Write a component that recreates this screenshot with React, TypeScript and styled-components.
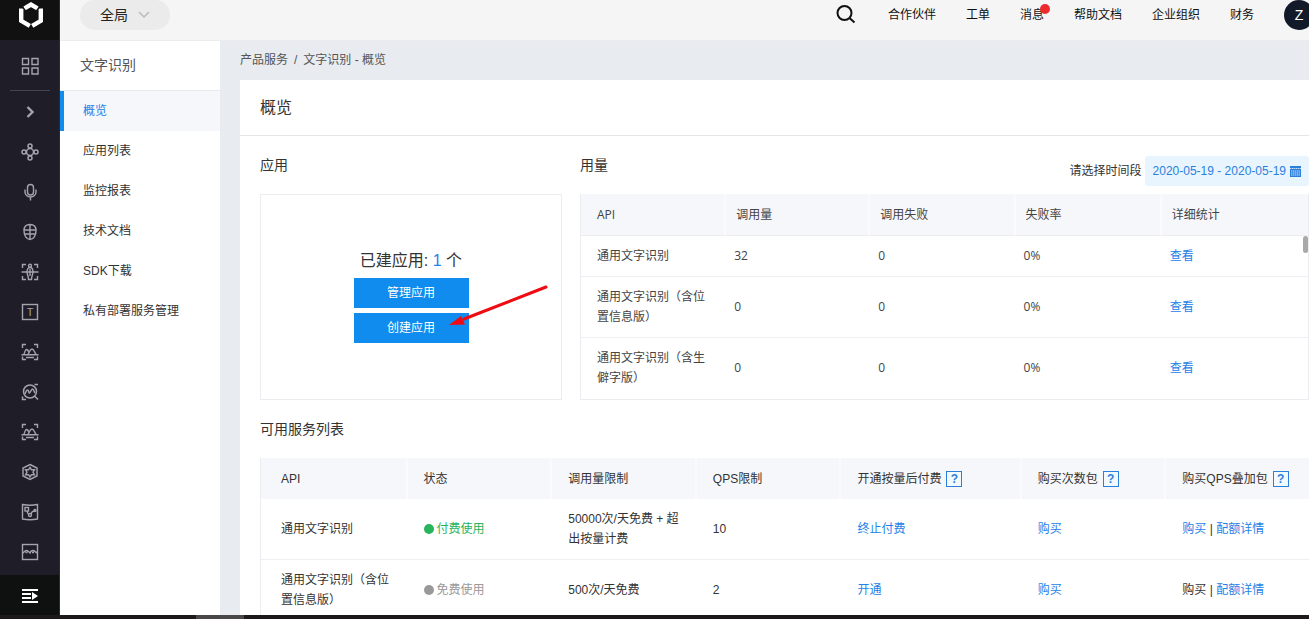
import React from 'react';
import styled, { createGlobalStyle } from 'styled-components';

const GlobalStyle = createGlobalStyle`
  *, *::before, *::after { box-sizing: border-box; }
  body {
    margin: 0;
    overflow: hidden;
    color: #333;
    background: #fff;
    font: 12px/20px "Liberation Sans", "Noto Sans CJK SC", sans-serif;
  }
  h1, h2, h3, p, ul { margin: 0; padding: 0; font-weight: 400; }
  ul { list-style: none; }
  a { color: inherit; text-decoration: none; }
  button, select { font: inherit; color: inherit; border: 0; cursor: pointer; }
  svg { display: block; }
`;

/* ---------- page frame ---------- */

const Page = styled.div`
  display: flex;
  flex-direction: column;
  height: 100vh;
  overflow: hidden;
`;

const Columns = styled.div`
  display: flex;
  flex: 1;
  min-height: 0;
`;

const BottomStrip = styled.div`
  flex: none;
  height: 4px;
  background: linear-gradient(90deg, #1e1a1b 196px, #4a4748 196px, #4a4748 244px, #1e1a1b 244px);
`;

const Body = styled.div`
  display: flex;
  flex: 1;
  flex-direction: column;
  min-width: 0;
`;

const Workspace = styled.div`
  display: flex;
  flex: 1;
  min-height: 0;
`;

/* ---------- dark icon rail ---------- */

const Rail = styled.nav`
  display: flex;
  flex: none;
  flex-direction: column;
  width: 60px;
  color: #a5a4ad;
  background: #1f1d28;
  border-right: 1px solid #2c2b30;
`;

const Logo = styled.a`
  display: flex;
  justify-content: center;
  height: 40px;
  padding: 2px 0 0 2px;
  background: #111;
`;

const RailButton = styled.button<{ $tall?: boolean }>`
  display: flex;
  flex: none;
  align-items: center;
  justify-content: center;
  height: ${(p) => (p.$tall ? 50 : 40)}px;
  padding: 2px 0 0;
  color: inherit;
  background: none;
`;

const RailDivider = styled.hr`
  flex: none;
  width: 40px;
  height: 1px;
  margin: 0 auto;
  border: 0;
  background: #45444f;
`;

const RailFooter = styled.button`
  display: flex;
  align-items: center;
  justify-content: center;
  height: 40px;
  margin-top: auto;
  padding: 2px 0 0;
  color: #fff;
  background: #0f1010;
`;

/* ---------- top bar ---------- */

const TopBar = styled.header`
  display: flex;
  flex: none;
  align-items: center;
  justify-content: space-between;
  height: 41px;
  padding: 0 0 10px 20px;
  color: #111;
  background: #f5f5f5;
  border-bottom: 1px solid #ececf0;
  overflow: hidden;
`;

const RegionPicker = styled.label`
  position: relative;
  display: block;
  width: 90px;
  height: 30px;
  color: #bbb;

  svg {
    position: absolute;
    top: 10px;
    right: 20px;
    pointer-events: none;
  }
`;

const RegionSelect = styled.select`
  width: 100%;
  height: 30px;
  padding: 0 20px;
  color: #222;
  font-size: 14px;
  background: #ebebeb;
  border-radius: 15px;
  appearance: none;
`;

const TopLinks = styled.div`
  display: flex;
  align-items: center;
  gap: 30px;
`;

const IconButton = styled.button`
  padding: 0;
  color: #111;
  background: none;
`;

const TopLink = styled.a`
  position: relative;
`;

const UnreadDot = styled.span`
  position: absolute;
  top: -1px;
  right: -6px;
  width: 10px;
  height: 10px;
  background: #ee2a2f;
  border-radius: 50%;
`;

const Avatar = styled.button`
  width: 30px;
  height: 30px;
  margin-right: -5px;
  padding: 0;
  color: #fff;
  font-size: 14px;
  background: #121929;
  border-radius: 50%;
`;

/* ---------- product menu ---------- */

const ProductMenu = styled.nav`
  flex: none;
  width: 160px;
  background: #fff;
`;

const ProductName = styled.h2`
  height: 50px;
  padding: 0 20px;
  color: #555;
  font-size: 14px;
  line-height: 48px;
  border-bottom: 1px solid #e8e9ee;
`;

const MenuLink = styled.a<{ $active?: boolean }>`
  display: block;
  height: 40px;
  padding-left: 19px;
  line-height: 40px;
  color: ${(p) => (p.$active ? '#2482e8' : '#333')};
  background: ${(p) => (p.$active ? '#f6f7fb' : '#fff')};
  border-left: 4px solid ${(p) => (p.$active ? '#108cee' : '#fff')};
`;

/* ---------- content ---------- */

const Main = styled.main`
  display: flex;
  flex: 1;
  flex-direction: column;
  min-width: 0;
  padding-left: 20px;
  background: #e8ebef;
`;

const Breadcrumb = styled.nav`
  display: flex;
  flex: none;
  gap: 6px;
  height: 39px;
  color: #555;
  line-height: 38px;
`;

const Panel = styled.section`
  flex: 1;
  min-height: 0;
  background: #fff;
  overflow: hidden;
`;

const PageTitle = styled.h1`
  height: 56px;
  padding-left: 20px;
  font-size: 16px;
  line-height: 56px;
  border-bottom: 1px solid #e4e5e8;
`;

const PanelBody = styled.div`
  padding-left: 20px;
`;

const Overview = styled.div`
  display: flex;
  gap: 18px;
`;

const AppColumn = styled.section`
  flex: none;
  width: 302px;
`;

const UsageColumn = styled.section`
  flex: 1;
  min-width: 0;
`;

const SectionHead = styled.div`
  display: flex;
  align-items: center;
  justify-content: space-between;
  height: 58px;
`;

const SectionTitle = styled.h3`
  font-size: 14px;
`;

const DateField = styled.div`
  display: flex;
  align-items: center;
  align-self: flex-end;
  gap: 3px;
  padding-bottom: 8px;
`;

const DateButton = styled.button`
  display: flex;
  align-items: center;
  gap: 4px;
  height: 30px;
  padding: 0 8px;
  color: #2b7fdc;
  background: #e8f5fe;
  border-radius: 3px;
`;

const AppCard = styled.div`
  position: relative;
  display: flex;
  flex-direction: column;
  align-items: center;
  justify-content: center;
  gap: 5px;
  height: 206px;
  border: 1px solid #ececf0;
`;

const AppCount = styled.p`
  margin-bottom: 2px;
  font-size: 16px;
`;

const Count = styled.span`
  color: #2482e8;
`;

const PrimaryButton = styled.button`
  width: 115px;
  height: 30px;
  padding: 0;
  color: #fff;
  background: #108cee;
`;

const Pointer = styled.svg`
  position: absolute;
  top: 88px;
  left: 187px;
  pointer-events: none;
`;

/* ---------- tables ---------- */

const Link = styled.a`
  color: #2482e8;
`;

const UsageFrame = styled.div`
  position: relative;
  height: 206px;
  border: 1px solid #ececf0;
  border-top: 0;
  overflow: hidden;
`;

const ScrollThumb = styled.span`
  position: absolute;
  top: 42px;
  right: 0;
  width: 5px;
  height: 17px;
  background: #a9a9a9;
  border-radius: 3px;
`;

const Table = styled.table`
  width: 100%;
  border-collapse: separate;
  border-spacing: 0;
  table-layout: fixed;

  th {
    font-weight: 400;
    text-align: left;
    background: #f6f7fb;
  }
  th + th { border-left: 2px solid #fbfbfd; }
  td { border-bottom: 1px solid #efeff3; }
`;

const UsageTable = styled(Table)`
  color: #444;
  font-family: "Open Sans", "Noto Sans CJK SC", sans-serif;

  th { height: 42px; padding: 0 10px; border-bottom: 1px solid #ececf0; }
  td { padding: 10px; }
  th:first-child, td:first-child { padding-left: 16px; }
  tr:last-child td { border-bottom: 0; }
`;

const ServiceTable = styled(Table)`
  border-left: 1px solid #ececf0;

  th { height: 41px; padding: 0 0 0 16px; }
  td { height: 61px; padding: 10px 12px 10px 18px; }
  th:first-child, td:first-child { padding-left: 20px; }
`;

const Column = styled.col<{ $share: number }>`
  width: ${(p) => p.$share}%;
`;

const HeadLabel = styled.span`
  display: flex;
  align-items: center;
  gap: 5px;
  padding-top: 1px;
  white-space: nowrap;
`;

const HelpButton = styled.button`
  width: 16px;
  height: 16px;
  padding: 0;
  color: #2b7fdc;
  font-weight: 700;
  line-height: 14px;
  background: #f3faff;
  border: 1px solid #2b7fdc;
`;

const Status = styled.span<{ $paid: boolean }>`
  display: flex;
  align-items: center;
  gap: 3px;
  color: ${(p) => (p.$paid ? '#27b45b' : '#999')};

  &::before {
    width: 10px;
    height: 10px;
    background: currentColor;
    border-radius: 50%;
    content: "";
  }
`;

/* ---------- icons ---------- */

const Glyph = ({ children, width = 1.4 }: { children: React.ReactNode; width?: number }) => (
  <svg width="18" height="18" viewBox="0 0 18 18" fill="none" stroke="currentColor" strokeWidth={width} aria-hidden="true">
    {children}
  </svg>
);

const corners = 'M1.5 5V1.5h3.5M13 1.5h3.5V5';

const LandscapeScan = () => (
  <Glyph>
    <path d={corners} />
    <path d="M3 11C4 9 4 6.500 5.500 6.500S7.500 8 8 9.500M7 11.500C8.500 9 9 6 11 6s2.500 3 4 5.500" />
    <path d="M0.500 11.800h17M1.500 13.500v3h3.500M16.500 13.500v3H13M5 14.500h8" />
  </Glyph>
);

const railIcons: { label: string; icon: React.ReactNode }[] = [
  {
    label: '展开',
    icon: <Glyph width={2.4}><path d="M6.500 4 11.500 9l-5 5" /></Glyph>,
  },
  {
    label: '节点',
    icon: (
      <Glyph width={1.5}>
        <circle cx="9" cy="9" r="3.500" />
        <circle cx="9" cy="3" r="2" />
        <circle cx="9" cy="15" r="2" />
        <circle cx="3" cy="9" r="2" />
        <circle cx="15" cy="9" r="2" />
      </Glyph>
    ),
  },
  {
    label: '语音',
    icon: (
      <Glyph>
        <rect x="6.500" y="1.500" width="6" height="10.500" rx="3" />
        <path d="M4 6.500V9a5.500 5 0 0 0 11 0V6.500M9.500 14v3.500" />
      </Glyph>
    ),
  },
  {
    label: '人脸',
    icon: (
      <Glyph>
        <path d="M9 1.500c4 0 6 2 6 6 0 5-2.500 9-6 9s-6-4-6-9c0-4 2-6 6-6zM9 1.500v15M3 7h12M4 11h10" />
      </Glyph>
    ),
  },
  {
    label: '人体',
    icon: (
      <Glyph>
        <path d={corners} />
        <path d="M1.500 13v3.500H5M13 16.500h3.500V13M0.500 9h17" />
        <circle cx="9" cy="2.800" r="1.500" />
        <path d="M9 4.500c2 0 3 2 3 4.500s-1.500 4-1.500 7.500h-3C7.500 13 6 11.500 6 9s1-4.500 3-4.500zM9 6v7" />
      </Glyph>
    ),
  },
  {
    label: '文字',
    icon: (
      <Glyph>
        <rect x="1.500" y="1.500" width="15" height="15" />
        <text x="9" y="13" fontSize="11" textAnchor="middle" fill="currentColor" stroke="none">T</text>
      </Glyph>
    ),
  },
  { label: '图像', icon: <LandscapeScan /> },
  {
    label: '图像搜索',
    icon: (
      <Glyph width={1.5}>
        <circle cx="9" cy="8.500" r="6.500" />
        <path d="M4 11C5 9 5 7 6.500 7s1 3 2 3 1.500-4 3-4 1.500 3 2.500 4M13.500 13l3.500 3.500M13.500 1.500H17M1.500 13.500v3H5" />
      </Glyph>
    ),
  },
  { label: '图像处理', icon: <LandscapeScan /> },
  {
    label: '知识',
    icon: (
      <Glyph>
        <path d="M9 1.500 16 5v8l-7 3.500L2 13V5z" />
        <path d="M9 4.500l1.500 2.200h3L12 9.200l1.500 2.500h-3L9 14l-1.500-2.300h-3L6 9.200 4.500 6.700h3z" />
      </Glyph>
    ),
  },
  {
    label: '数据',
    icon: (
      <Glyph>
        <path d="M1.500 1.500q7.500 1.500 15 0v14.500q-7.500 1.500-15 0z" />
        <rect x="4" y="4.500" width="3.500" height="3.500" />
        <circle cx="9" cy="12" r="1.500" />
        <circle cx="14" cy="7.500" r="1" />
        <path d="M6.500 8v2l1.500 1.200M10 11c.500-2 2-3 3.500-3" />
      </Glyph>
    ),
  },
  {
    label: '图片',
    icon: (
      <Glyph>
        <rect x="1.500" y="1.500" width="15" height="15" />
        <path d="M1.500 10C3 9.500 4 7.500 5.500 7.500S8 9 9 10c.500-1.500 1.500-2.500 3-2.500s2.500 2 4.500 2.500M4.500 9.500h2M11 9.500h2" />
      </Glyph>
    ),
  },
];

/* ---------- data ---------- */

const topLinks = ['合作伙伴', '工单', '消息', '帮助文档', '企业组织', '财务'];
const menu = ['概览', '应用列表', '监控报表', '技术文档', 'SDK下载', '私有部署服务管理'];

const usageHead = ['API', '调用量', '调用失败', '失败率', '详细统计'];
const usageShares = [19.7, 19.8, 20, 20.1, 20.4];
const usage = [
  { api: '通用文字识别', calls: 32, failed: 0, rate: '0%' },
  { api: '通用文字识别（含位置信息版）', calls: 0, failed: 0, rate: '0%' },
  { api: '通用文字识别（含生僻字版）', calls: 0, failed: 0, rate: '0%' },
];

const serviceHead = [
  { label: 'API' },
  { label: '状态' },
  { label: '调用量限制' },
  { label: 'QPS限制' },
  { label: '开通按量后付费', help: true },
  { label: '购买次数包', help: true },
  { label: '购买QPS叠加包', help: true },
];
const serviceShares = [13.8, 13.8, 13.8, 13.8, 17.2, 13.8, 13.8];
const services = [
  { api: '通用文字识别', paid: true, limit: '50000次/天免费 + 超出按量计费', qps: 10, action: '终止付费' },
  { api: '通用文字识别（含位置信息版）', paid: false, limit: '500次/天免费', qps: 2, action: '开通' },
];

export default function App() {
  return (
    <Page>
      <GlobalStyle />
      <Columns>
        <Rail aria-label="产品">
          <Logo href="#" aria-label="首页">
            <svg width="26" height="26" viewBox="0 0 26 26" fill="none" stroke="#fff" strokeWidth="4.400" aria-hidden="true">
              <path d="M6.500 6.300 13 2.600l6.500 3.700" />
              <path d="M3.200 6.500v12.300l8.600 5" />
              <path d="M22.800 6.500v12.300l-8.600 5" />
              <path d="M3 4.500l5.500 4.500M23 4.500L17.500 9" stroke="#111" strokeWidth="1" />
            </svg>
          </Logo>
          <RailButton $tall aria-label="全部产品">
            <Glyph>
              <path d="M1.500 1.500h6v6h-6zM11 1.500h6v6h-6zM1.500 11h6v6h-6zM11 11h6v6h-6z" />
            </Glyph>
          </RailButton>
          <RailDivider />
          {railIcons.map((item) => (
            <RailButton key={item.label} aria-label={item.label}>{item.icon}</RailButton>
          ))}
          <RailFooter aria-label="收起菜单">
            <svg width="18" height="14" viewBox="0 0 18 14" fill="currentColor" aria-hidden="true">
              <path d="M1 0h16v2H1zM1 4h9v2H1zM1 8h9v2H1zM1 12h16v2H1zM11 3l6 4-6 4z" />
            </svg>
          </RailFooter>
        </Rail>

        <Body>
          <TopBar>
            <RegionPicker>
              <RegionSelect aria-label="区域" defaultValue="全局">
                <option>全局</option>
              </RegionSelect>
              <svg width="12" height="10" viewBox="0 0 12 10" fill="none" stroke="currentColor" strokeWidth="1.500" aria-hidden="true">
                <path d="M1 2l5 5 5-5" />
              </svg>
            </RegionPicker>
            <TopLinks>
              <IconButton aria-label="搜索">
                <svg width="22" height="20" viewBox="0 0 22 20" fill="none" stroke="currentColor" strokeWidth="2" aria-hidden="true">
                  <circle cx="8.500" cy="8" r="7" />
                  <path d="M13.500 13l5 4.500" />
                </svg>
              </IconButton>
              {topLinks.map((label) => (
                <TopLink key={label} href="#">
                  {label}
                  {label === '消息' && <UnreadDot />}
                </TopLink>
              ))}
              <Avatar aria-label="账户">Z</Avatar>
            </TopLinks>
          </TopBar>

          <Workspace>
            <ProductMenu aria-label="文字识别">
              <ProductName>文字识别</ProductName>
              <ul>
                {menu.map((label, i) => (
                  <li key={label}>
                    <MenuLink href="#" $active={i === 0}>{label}</MenuLink>
                  </li>
                ))}
              </ul>
            </ProductMenu>

            <Main>
              <Breadcrumb aria-label="位置">
                <a href="#">产品服务</a>
                <span>/</span>
                <span>文字识别 - 概览</span>
              </Breadcrumb>
              <Panel>
                <PageTitle>概览</PageTitle>
                <PanelBody>
                  <Overview>
                    <AppColumn>
                      <SectionHead>
                        <SectionTitle>应用</SectionTitle>
                      </SectionHead>
                      <AppCard>
                        <AppCount>已建应用: <Count>1</Count> 个</AppCount>
                        <PrimaryButton>管理应用</PrimaryButton>
                        <PrimaryButton>创建应用</PrimaryButton>
                        <Pointer width="104" height="46" viewBox="0 0 104 46" aria-hidden="true">
                          <path d="M98 4 16 36" stroke="#f00a12" strokeWidth="3" strokeLinecap="round" />
                          <path d="M1 42 13 33 17 41.500z" fill="#f00a12" />
                        </Pointer>
                      </AppCard>
                    </AppColumn>

                    <UsageColumn>
                      <SectionHead>
                        <SectionTitle>用量</SectionTitle>
                        <DateField>
                          <label htmlFor="period">请选择时间段</label>
                          <DateButton id="period">
                            2020-05-19 - 2020-05-19
                            <svg width="11" height="11" viewBox="0 0 11 11" aria-hidden="true">
                              <path d="M0 0h11v11H0z" fill="currentColor" />
                              <path d="M0 2.500h11M1 5h9M1 7h9M1 9h9" stroke="#e8f5fe" strokeWidth=".8" strokeDasharray="1.500 .5" />
                            </svg>
                          </DateButton>
                        </DateField>
                      </SectionHead>
                      <UsageFrame>
                        <UsageTable>
                          <colgroup>
                            {usageShares.map((share, i) => <Column key={i} $share={share} />)}
                          </colgroup>
                          <thead>
                            <tr>{usageHead.map((label) => <th key={label}>{label}</th>)}</tr>
                          </thead>
                          <tbody>
                            {usage.map((row) => (
                              <tr key={row.api}>
                                <td>{row.api}</td>
                                <td>{row.calls}</td>
                                <td>{row.failed}</td>
                                <td>{row.rate}</td>
                                <td><Link href="#">查看</Link></td>
                              </tr>
                            ))}
                          </tbody>
                        </UsageTable>
                        <ScrollThumb />
                      </UsageFrame>
                    </UsageColumn>
                  </Overview>

                  <SectionHead>
                    <SectionTitle>可用服务列表</SectionTitle>
                  </SectionHead>
                  <ServiceTable>
                    <colgroup>
                      {serviceShares.map((share, i) => <Column key={i} $share={share} />)}
                    </colgroup>
                    <thead>
                      <tr>
                        {serviceHead.map((col) => (
                          <th key={col.label}>
                            <HeadLabel>
                              {col.label}
                              {col.help && <HelpButton aria-label={`${col.label}说明`}>?</HelpButton>}
                            </HeadLabel>
                          </th>
                        ))}
                      </tr>
                    </thead>
                    <tbody>
                      {services.map((row) => (
                        <tr key={row.api}>
                          <td>{row.api}</td>
                          <td><Status $paid={row.paid}>{row.paid ? '付费使用' : '免费使用'}</Status></td>
                          <td>{row.limit}</td>
                          <td>{row.qps}</td>
                          <td><Link href="#">{row.action}</Link></td>
                          <td><Link href="#">购买</Link></td>
                          <td>
                            {row.paid ? <Link href="#">购买</Link> : '购买'} | <Link href="#">配额详情</Link>
                          </td>
                        </tr>
                      ))}
                    </tbody>
                  </ServiceTable>
                </PanelBody>
              </Panel>
            </Main>
          </Workspace>
        </Body>
      </Columns>
      <BottomStrip />
    </Page>
  );
}
